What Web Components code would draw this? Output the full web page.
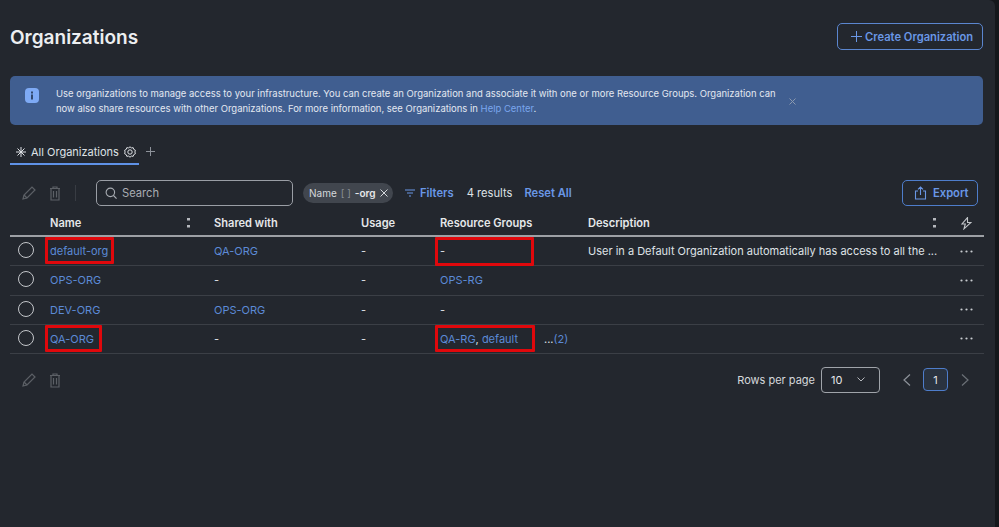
<!DOCTYPE html>
<html>
<head>
<meta charset="utf-8">
<title>Organizations</title>
<style>
  html, body { margin: 0; height: 100%; background: #14171b; }
  body { font-family: Inter, "Liberation Sans", sans-serif; color: #e4e6e9; overflow: hidden; }
</style>
</head>
<body>
<org-page>
  <page-header></page-header>
  <info-banner></info-banner>
  <tab-bar></tab-bar>
  <org-toolbar></org-toolbar>
  <org-table></org-table>
  <org-footer></org-footer>
</org-page>

<script>
const ICONS = {
  pencil: '<svg width="16" height="16" viewBox="0 0 16 16" fill="none" stroke="currentColor" stroke-width="1.2"><path d="M2 14l1-4 8-8 3 3-8 8z"/><path d="M3 10l3 3"/></svg>',
  trash: '<svg width="14" height="16" viewBox="0 0 14 16" fill="none" stroke="currentColor" stroke-width="1.2"><path d="M2 3.5h10M5 3.500V2h4v1.500M3 3.500V15h8V3.500M5.500 6v6.500M8.500 6v6.500"/></svg>'
};

class OrgPage extends HTMLElement {
  constructor() {
    super();
    this.attachShadow({ mode: 'open' }).innerHTML = `
      <style>
        :host {
          display: block;
          box-sizing: border-box;
          width: 995px;
          height: 527px;
          padding: 1px 12px 0 10px;
          background: #23272e;
          border-top-right-radius: 6px;
        }
      </style>
      <slot></slot>`;
  }
}

class PageHeader extends HTMLElement {
  constructor() {
    super();
    this.attachShadow({ mode: 'open' }).innerHTML = `
      <style>
        :host { display: flex; justify-content: space-between; align-items: center; height: 27px; margin-top: 22px; }
        h1 { margin: 1px 0 0; font-size: 19px; font-weight: 600; color: #eceef0; }
        button {
          display: flex; align-items: center; gap: 3px;
          box-sizing: border-box; width: 146px; height: 27px; padding: 0 0 0 13px;
          background: none; border: 1.5px solid #5b86cf; border-radius: 5px;
          color: #6a97e6; font: 600 11.2px Inter, sans-serif; white-space: nowrap;
        }
      </style>
      <h1>Organizations</h1>
      <button><svg width="11" height="11" viewBox="0 0 11 11" stroke="currentColor" stroke-width="1"><path d="M5.5 0v11M0 5.5h11"/></svg>Create Organization</button>`;
  }
}

class InfoBanner extends HTMLElement {
  constructor() {
    super();
    this.attachShadow({ mode: 'open' }).innerHTML = `
      <style>
        :host {
          display: flex; align-items: center; box-sizing: border-box;
          height: 49px; margin-top: 26px; padding: 1px 0 0 15px;
          background: #405e90; border-radius: 5px;
          font-size: 9.47px; line-height: 15px; color: #e3e8f0;
        }
        .icon { flex: none; margin: -11px 17px 0 0; display: block; }
        p { margin: 0; width: 725px; white-space: nowrap; }
        a { color: #7ba6ee; }
        .close { margin: 1px 0 0 8px; color: #8b99af; display: block; }
      </style>
      <svg class="icon" width="14" height="15" viewBox="0 0 14 15"><rect width="14" height="15" rx="4" fill="#7eaaf5"/><rect x="6" y="6.5" width="2" height="5" fill="#31486f"/><rect x="6" y="3.5" width="2" height="2" fill="#31486f"/></svg>
      <p>Use organizations to manage access to your infrastructure. You can create an Organization and associate it with one or more Resource Groups. Organization can<br>now also share resources with other Organizations. For more information, see Organizations in <a>Help Center</a>.</p>
      <svg class="close" width="7" height="7" viewBox="0 0 7 7" stroke="currentColor" stroke-width="1"><path d="M.5.5l6 6M6.5.5l-6 6"/></svg>`;
  }
}

class TabBar extends HTMLElement {
  constructor() {
    super();
    this.attachShadow({ mode: 'open' }).innerHTML = `
      <style>
        :host { display: flex; align-items: flex-start; height: 37px; margin-top: 19px; font-size: 11px; color: #dfe2e6; }
        .tab {
          display: flex; align-items: center; box-sizing: border-box; width: 129px; height: 21px;
          padding: 0 0 3px 6px; gap: 5px; border-bottom: 2px solid #5f92e6; white-space: nowrap;
        }
        .add { margin: 3px 0 0 7px; color: #8d929a; display: block; }
        svg { display: block; flex: none; }
      </style>
      <div class="tab">
        <svg width="10" height="10" viewBox="0 0 10 10" stroke="currentColor" stroke-width="1"><path d="M5 0v10M0 5h10M1.5 1.5l7 7M8.5 1.5l-7 7"/></svg>
        <span>All Organizations</span>
        <svg width="12" height="12" viewBox="0 0 12 12" fill="none" stroke="currentColor" stroke-width="1"><path d="M6 .8l1.4 1.1 1.8-.2.6 1.7 1.6.9-.5 1.7.5 1.7-1.6.9-.6 1.7-1.8-.2L6 11.2 4.600 10.100l-1.800.2-.6-1.700-1.600-.9.500-1.700-.5-1.700 1.600-.9.600-1.700 1.800.2z"/><circle cx="6" cy="6" r="2.200"/></svg>
      </div>
      <svg class="add" width="9" height="9" viewBox="0 0 9 9" stroke="currentColor" stroke-width="1"><path d="M4.500 0v9M0 4.500h9"/></svg>`;
  }
}

class OrgToolbar extends HTMLElement {
  constructor() {
    super();
    this.attachShadow({ mode: 'open' }).innerHTML = `
      <style>
        :host { display: flex; align-items: center; height: 27px; margin-top: -2px; font-size: 11.2px; }
        svg { display: block; flex: none; }
        .edit { color: #5c6066; margin-left: 11px; }
        .del { color: #5c6066; margin-left: 11px; }
        .sep { width: 1px; height: 16px; background: #383c43; margin: 0 20px 0 13px; }
        .search {
          display: flex; align-items: center; gap: 5px; box-sizing: border-box;
          width: 197px; height: 26px; padding-left: 8px;
          border: 1.5px solid #9a9ea5; border-radius: 5px; color: #a8acb2;
        }
        .chip {
          display: flex; align-items: center; box-sizing: border-box; height: 20px; width: 90px; margin-left: 10px;
          padding-left: 6px; background: #41464e; border-radius: 10px; font-size: 10px; color: #d5d8dc; white-space: nowrap;
        }
        .chip i { font-style: normal; color: #8b9097; margin: 0 4px; }
        .chip b { font-weight: 600; color: #e6e8ea; }
        .chip svg { margin-left: 4px; }
        .filters { display: flex; align-items: center; gap: 5px; margin-left: 12px; color: #6a97e6; font-weight: 600; }
        .count { margin-left: 13px; color: #dfe2e6; }
        .reset { margin-left: 12px; color: #6a97e6; font-weight: 600; }
        .export {
          display: flex; align-items: center; gap: 6px; box-sizing: border-box; margin: 0 5px 0 auto;
          width: 76px; height: 26px; padding-left: 11px;
          border: 1.5px solid #4e7dcb; border-radius: 5px; color: #6a97e6; font-weight: 600;
        }
      </style>
      <span class="edit">${ICONS.pencil}</span>
      <span class="del">${ICONS.trash}</span>
      <span class="sep"></span>
      <div class="search">
        <svg width="12" height="12" viewBox="0 0 13 13" fill="none" stroke="currentColor" stroke-width="1.200"><circle cx="5.800" cy="5.800" r="4.600"/><path d="M9.200 9.200l3.300 3.300"/></svg>
        <span>Search</span>
      </div>
      <div class="chip">Name<i>[ ]</i><b>-org</b>
        <svg width="8" height="8" viewBox="0 0 8 8" stroke="currentColor" stroke-width="1"><path d="M.5.500l7 7M7.500.500l-7 7"/></svg>
      </div>
      <div class="filters">
        <svg width="10" height="8" viewBox="0 0 10 8" stroke="currentColor" stroke-width="1.200"><path d="M0 1h10M2 4h6M4 7h2"/></svg>
        <span>Filters</span>
      </div>
      <span class="count">4 results</span>
      <span class="reset">Reset All</span>
      <div class="export">
        <svg width="13" height="14" viewBox="0 0 13 14" fill="none" stroke="currentColor" stroke-width="1.100"><path d="M4 5H1.500v8h10V5H9M6.500 9V1M4 3.300L6.500 1 9 3.300"/></svg>
        <span>Export</span>
      </div>`;
  }
}

class OrgRow extends HTMLElement {
  constructor() {
    super();
    this.attachShadow({ mode: 'open' }).innerHTML = `
      <style>
        :host {
          display: grid; grid-template-columns: 40px 164px 147px 79px 148px 1fr 40px;
          align-items: center; height: 29.25px; box-sizing: border-box;
          border-bottom: 1px solid #3b3f46; font-size: 11px; color: #dfe2e6;
        }
        .radio { box-sizing: border-box; width: 16px; height: 16px; margin: -2px 0 0 8px; border: 1.500px solid #c3c6ca; border-radius: 50%; }
        .more { display: block; margin: 0 0 0 16px; color: #c8cbcf; }
      </style>
      <div class="radio"></div>
      <slot name="name"></slot>
      <slot name="shared"></slot>
      <slot name="usage"></slot>
      <slot name="groups"></slot>
      <slot name="desc"></slot>
      <svg class="more" width="13" height="3" viewBox="0 0 13 3" fill="currentColor"><circle cx="1.500" cy="1.500" r="1.100"/><circle cx="6.500" cy="1.500" r="1.100"/><circle cx="11.500" cy="1.500" r="1.100"/></svg>`;
  }
}

// mark="w" or mark="w,h" rings the cell with the red annotation box
class OrgCell extends HTMLElement {
  constructor() {
    super();
    const [width, height] = (this.getAttribute('mark') || '').split(',');
    this.attachShadow({ mode: 'open' }).innerHTML = `
      <style>
        :host { display: block; position: relative; white-space: nowrap; font-size: 11px; color: #dfe2e6; }
        .mark {
          position: absolute; left: -5px; top: -7px; box-sizing: border-box; height: ${height || 27}px;
          border: 3px solid #e0080c; border-radius: 1px; width: ${width}px;
        }
      </style>
      <slot></slot>
      ${width ? '<div class="mark"></div>' : ''}`;
  }
}

class OrgTable extends HTMLElement {
  constructor() {
    super();
    const rows = [
      ['default-org', '69', 'QA-ORG', '-', '99,29', 'User in a Default Organization automatically has access to all the ...'],
      ['OPS-ORG', '', '-', 'OPS-RG', '', ''],
      ['DEV-ORG', '', 'OPS-ORG', '-', '', ''],
      ['QA-ORG', '57', '-', 'QA', '100', '']
    ];
    const link = t => (t === '-' ? '-' : `<a style="color:#5c8ad6">${t}</a>`);
    const body = rows.map(r => {
      const groups = r[3] === 'QA'
        ? '<a style="color:#5c8ad6">QA-RG</a>, <a style="color:#5c8ad6">default</a><span style="position:absolute;left:104px;top:0"><span style="color:#dfe2e6">...</span><a style="color:#5c8ad6">(2)</a></span>'
        : link(r[3]);
      return `<org-row>
        <org-cell slot="name" ${r[1] ? `mark="${r[1]}"` : ''}>${link(r[0])}</org-cell>
        <org-cell slot="shared">${link(r[2])}</org-cell>
        <org-cell slot="usage">-</org-cell>
        <org-cell slot="groups" ${r[4] ? `mark="${r[4]}"` : ''}>${groups}</org-cell>
        <org-cell slot="desc">${r[5]}</org-cell>
      </org-row>`;
    }).join('');
    const sort = '<svg width="3" height="10" viewBox="0 0 3 10" fill="#b5b8bd"><rect y="0" width="3" height="2.500"/><rect y="7" width="3" height="2.500"/></svg>';
    this.attachShadow({ mode: 'open' }).innerHTML = `
      <style>
        :host { display: block; width: 974px; margin-top: 3px; }
        .head {
          display: grid; grid-template-columns: 40px 164px 147px 79px 148px 1fr 40px;
          align-items: center; height: 28px; box-sizing: border-box;
          border-bottom: 2px solid #9da0a5; font-size: 11.1px; font-weight: 600; color: #e6e8ea;
        }
        .head > div { display: flex; align-items: center; justify-content: space-between; padding-top: 2px; }
        .name { padding-right: 24px; }
        .desc { padding-right: 8.5px; }
        .bolt { padding-left: 17px; color: #c3c6ca; }
      </style>
      <div class="head">
        <div></div>
        <div class="name"><span>Name</span>${sort}</div>
        <div>Shared with</div>
        <div>Usage</div>
        <div>Resource Groups</div>
        <div class="desc"><span>Description</span>${sort}</div>
        <div class="bolt"><svg width="11" height="13" viewBox="0 0 11 13" fill="none" stroke="currentColor" stroke-width="1.100"><path d="M6.500.7L1 7h3.300L3 11.800 10 5.500H6.500z"/></svg></div>
      </div>
      ${body}`;
  }
}

class OrgFooter extends HTMLElement {
  constructor() {
    super();
    this.attachShadow({ mode: 'open' }).innerHTML = `
      <style>
        :host { display: flex; align-items: center; height: 27px; margin-top: 12px; font-size: 11px; color: #d5d8dc; }
        svg { display: block; flex: none; }
        .edit, .del { color: #5c6066; margin-left: 11px; }
        .rows { margin-left: auto; }
        .select {
          display: flex; align-items: center; justify-content: space-between; box-sizing: border-box;
          width: 59px; height: 26px; margin-left: 6px; padding: 0 14px 0 9px;
          border: 1.500px solid #a0a4aa; border-radius: 4px; color: #e4e6e9;
        }
        .prev { margin-left: 23px; color: #8d929a; }
        .page {
          display: flex; align-items: center; justify-content: center; box-sizing: border-box;
          width: 25px; height: 23px; margin: 0 13px 0 12px;
          border: 1.500px solid #4e7dcb; border-radius: 4px; color: #e4e6e9; background: #2a3340;
        }
        .next { color: #6b7077; margin-right: 14px; }
      </style>
      <span class="edit">${ICONS.pencil}</span>
      <span class="del">${ICONS.trash}</span>
      <span class="rows">Rows per page</span>
      <div class="select"><span>10</span>
        <svg width="8" height="5" viewBox="0 0 8 5" fill="none" stroke="#b5b8bd" stroke-width="1"><path d="M.5.500L4 4 7.500.500"/></svg>
      </div>
      <svg class="prev" width="8" height="12" viewBox="0 0 8 12" fill="none" stroke="currentColor" stroke-width="1.200"><path d="M7 .5L1 6l6 5.500"/></svg>
      <div class="page">1</div>
      <svg class="next" width="8" height="12" viewBox="0 0 8 12" fill="none" stroke="currentColor" stroke-width="1.200"><path d="M1 .5L7 6l-6 5.500"/></svg>`;
  }
}

customElements.define('org-page', OrgPage);
customElements.define('page-header', PageHeader);
customElements.define('info-banner', InfoBanner);
customElements.define('tab-bar', TabBar);
customElements.define('org-toolbar', OrgToolbar);
customElements.define('org-row', OrgRow);
customElements.define('org-cell', OrgCell);
customElements.define('org-table', OrgTable);
customElements.define('org-footer', OrgFooter);
</script>
</body>
</html>
